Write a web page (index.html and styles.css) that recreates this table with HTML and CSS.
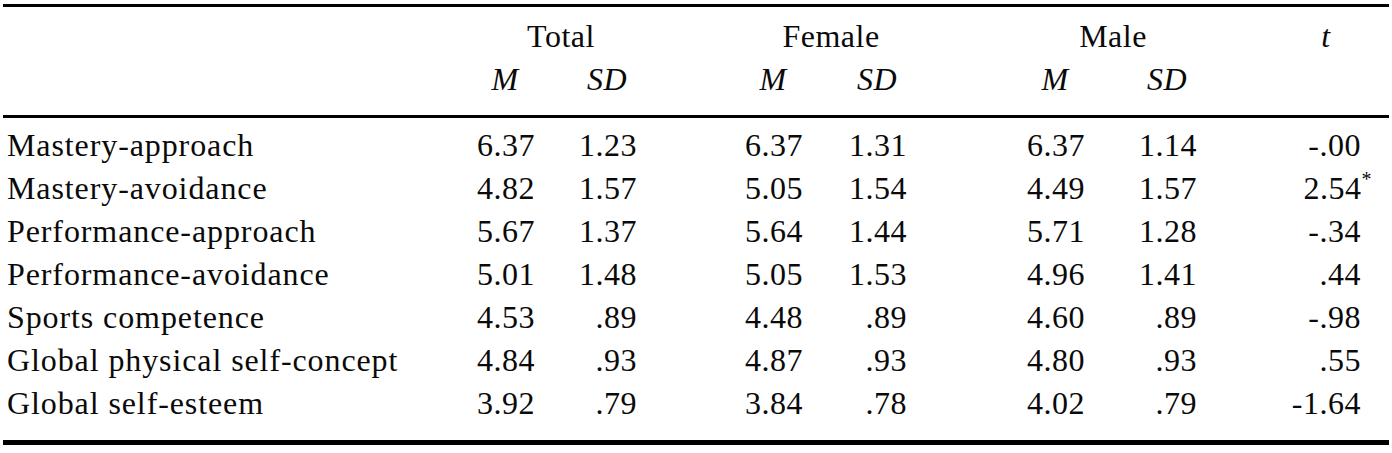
FILE: index.html
```html
<!DOCTYPE html>
<html lang="en">
<head>
<meta charset="utf-8">
<title>Descriptive statistics</title>
<link rel="stylesheet" href="styles.css">
</head>
<body>
<table class="stats">
  <colgroup>
    <col class="c-label">
    <col class="c-m1">
    <col class="c-sd1">
    <col class="c-m2">
    <col class="c-sd2">
    <col class="c-m3">
    <col class="c-sd3">
    <col class="c-t">
  </colgroup>
  <thead>
    <tr class="head-top">
      <th class="lbl"></th>
      <th class="grp g1" colspan="2">Total</th>
      <th class="grp g2" colspan="2">Female</th>
      <th class="grp g3" colspan="2">Male</th>
      <th class="tcol it">t</th>
    </tr>
    <tr class="head-sub">
      <th class="lbl"></th>
      <th class="m1 it">M</th>
      <th class="sd1 it">SD</th>
      <th class="m2 it">M</th>
      <th class="sd2 it">SD</th>
      <th class="m3 it">M</th>
      <th class="sd3 it">SD</th>
      <th class="tcol"></th>
    </tr>
  </thead>
  <tbody>
    <tr class="first">
      <td class="lbl">Mastery-approach</td>
      <td class="m1">6.37</td><td class="sd1">1.23</td>
      <td class="m2">6.37</td><td class="sd2">1.31</td>
      <td class="m3">6.37</td><td class="sd3">1.14</td>
      <td class="tcol num">-.00</td>
    </tr>
    <tr>
      <td class="lbl">Mastery-avoidance</td>
      <td class="m1">4.82</td><td class="sd1">1.57</td>
      <td class="m2">5.05</td><td class="sd2">1.54</td>
      <td class="m3">4.49</td><td class="sd3">1.57</td>
      <td class="tcol num">2.54<span class="star">*</span></td>
    </tr>
    <tr>
      <td class="lbl">Performance-approach</td>
      <td class="m1">5.67</td><td class="sd1">1.37</td>
      <td class="m2">5.64</td><td class="sd2">1.44</td>
      <td class="m3">5.71</td><td class="sd3">1.28</td>
      <td class="tcol num">-.34</td>
    </tr>
    <tr>
      <td class="lbl">Performance-avoidance</td>
      <td class="m1">5.01</td><td class="sd1">1.48</td>
      <td class="m2">5.05</td><td class="sd2">1.53</td>
      <td class="m3">4.96</td><td class="sd3">1.41</td>
      <td class="tcol num">.44</td>
    </tr>
    <tr>
      <td class="lbl">Sports competence</td>
      <td class="m1">4.53</td><td class="sd1">.89</td>
      <td class="m2">4.48</td><td class="sd2">.89</td>
      <td class="m3">4.60</td><td class="sd3">.89</td>
      <td class="tcol num">-.98</td>
    </tr>
    <tr>
      <td class="lbl">Global physical self-concept</td>
      <td class="m1">4.84</td><td class="sd1">.93</td>
      <td class="m2">4.87</td><td class="sd2">.93</td>
      <td class="m3">4.80</td><td class="sd3">.93</td>
      <td class="tcol num">.55</td>
    </tr>
    <tr class="last">
      <td class="lbl">Global self-esteem</td>
      <td class="m1">3.92</td><td class="sd1">.79</td>
      <td class="m2">3.84</td><td class="sd2">.78</td>
      <td class="m3">4.02</td><td class="sd3">.79</td>
      <td class="tcol num">-1.64</td>
    </tr>
  </tbody>
</table>
</body>
</html>
```

FILE: styles.css
```css
html, body {
  margin: 0;
  padding: 0;
  background: #ffffff;
}

body {
  padding: 4px 0 0 3px;
}

.stats {
  table-layout: fixed;
  width: 1386px;
  border-collapse: separate;
  border-spacing: 0;
  border-top: 3px solid #000;
  border-bottom: 5px solid #000;
  font-family: "Liberation Serif", "Times New Roman", serif;
  font-size: 32px;
  letter-spacing: 0.5px;
  color: #0a0a0a;
}

.c-label { width: 472px; }
.c-m1 { width: 60px; }
.c-sd1 { width: 102px; }
.c-m2 { width: 166px; }
.c-sd2 { width: 104px; }
.c-m3 { width: 178px; }
.c-sd3 { width: 112px; }
.c-t { width: 192px; }

.stats th,
.stats td {
  padding: 0;
  line-height: 43px;
  font-weight: normal;
  text-align: right;
  vertical-align: baseline;
  white-space: nowrap;
}

.stats thead th { text-align: center; }

.stats .it { font-style: italic; }

.stats .lbl { text-align: left; padding-left: 4px; letter-spacing: 0.9px; }
.stats .sd1 { padding-left: 42px; }
.stats .m2 { padding-left: 106px; }
.stats .sd2 { padding-left: 44px; }
.stats .m3 { padding-left: 118px; }
.stats .sd3 { padding-left: 52px; }
.stats .tcol { padding-left: 94px; padding-right: 28px; }

.stats .g1 { padding-left: 10px; }
.stats .g2 { padding-left: 118px; }
.stats .g3 { padding-left: 122px; }

.head-top th { padding-top: 8px; }
.head-sub th {
  padding-bottom: 14px;
  border-bottom: 3px solid #000;
}

tbody tr.first td { padding-top: 6px; }
tbody tr.last td { padding-bottom: 15px; }

.star {
  font-size: 20px;
  line-height: 0;
  vertical-align: 13px;
  margin-right: -11px;
}
```
